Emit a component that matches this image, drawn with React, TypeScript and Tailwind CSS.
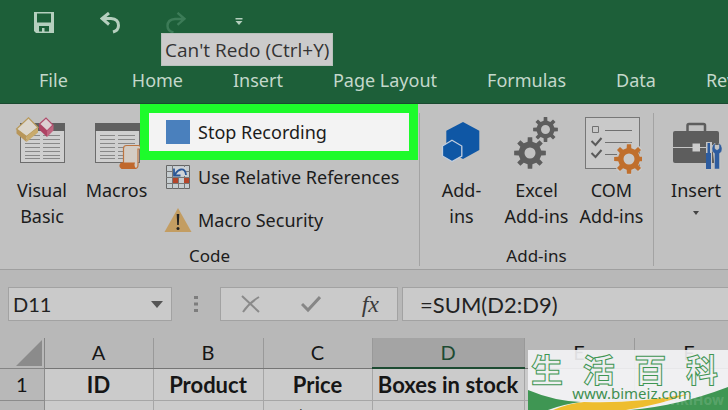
import type { ReactNode } from 'react';

const tabs = ['Home', 'Insert', 'Page Layout', 'Formulas', 'Data', 'Review'];

const columns = [
  { letter: 'A', title: 'ID', value: '1', width: 'w-[109px]' },
  { letter: 'B', title: 'Product', value: 'Mugs', width: 'w-[110px]', align: 'text-left' },
  { letter: 'C', title: 'Price', value: '$200', width: 'w-[109px]' },
  { letter: 'D', title: 'Boxes in stock', value: '200', width: 'w-[152px]', selected: true },
  { letter: 'E', title: '', value: '', width: 'w-[110px]' },
  { letter: 'F', title: '', value: '', width: 'w-[110px]' },
];

function gearPath(cx: number, cy: number, outer: number, inner: number, hole: number) {
  const teeth = 8;
  const step = (Math.PI * 2) / teeth;
  const points: string[] = [];
  const add = (r: number, a: number) =>
    points.push(`${(cx + r * Math.cos(a)).toFixed(2)} ${(cy + r * Math.sin(a)).toFixed(2)}`);
  for (let i = 0; i < teeth; i++) {
    const a = i * step - Math.PI / 2;
    add(inner, a - step * 0.27);
    add(outer, a - step * 0.18);
    add(outer, a + step * 0.18);
    add(inner, a + step * 0.27);
  }
  return `M${points.join('L')}Z M${cx - hole} ${cy}a${hole} ${hole} 0 1 0 ${hole * 2} 0a${hole} ${hole} 0 1 0 ${-hole * 2} 0Z`;
}

function LargeIcon({ children }: { children: ReactNode }) {
  return (
    <svg viewBox="0 0 60 60" className="h-[60px] w-[60px] shrink-0" fill="none" aria-hidden="true">
      {children}
    </svg>
  );
}

function CodeWindow() {
  return (
    <>
      <rect x="8.5" y="6.5" width="44" height="39" fill="#cfcfcf" stroke="#6c6c6c" />
      <path d="M8 6h45v8H8z" fill="#606060" />
      <path
        d="M13 18.5h15M31 18.5h17M13 22.5h15M31 22.5h17M13 26.5h15M31 26.5h17M13 30.5h15M31 30.5h17M13 34.5h15M31 34.5h17M13 38.5h15M31 38.5h17M13 41.5h15M31 41.5h17"
        stroke="#888"
      />
    </>
  );
}

function VisualBasicIcon() {
  return (
    <LargeIcon>
      <CodeWindow />
      <path d="M4.500 12 16.500 .8 26 10.500 14.500 19.500Z" fill="#dcd6cc" stroke="#b89a5c" strokeWidth="1.200" />
      <path d="M4.500 12 14.500 19.500V25L4.500 16.500Z" fill="#b8965a" />
      <path d="M14.500 19.500 26 10.500V15.500L14.500 25Z" fill="#c8aa6c" />
      <path d="M27.500 7 34 1 41 8 35 14Z" fill="#dccfd2" stroke="#b04c6c" strokeWidth="1.200" />
      <path d="M27 7 35 14V20L27 12.500Z" fill="#ae4364" />
      <path d="M35 14 41.500 8V13.500L35 20Z" fill="#c0647f" />
    </LargeIcon>
  );
}

function MacrosIcon() {
  return (
    <LargeIcon>
      <CodeWindow />
      <path
        d="M36.500 46V31.500q0-3 3-3H51q3 0 3 3.500h-3V48q0 3.500-3 3.500H36"
        fill="#d3ccc4"
        stroke="#bd7440"
        strokeWidth="1.200"
      />
      <path d="M34 45.500h14q-1.500 3.500 1.500 6.500H34.500q-4-3-.5-6.500Z" fill="#c0682c" />
    </LargeIcon>
  );
}

function AddInsIcon() {
  return (
    <LargeIcon>
      <path d="M31 5 47.300 13.700V33L31 42 14.300 33V13.700Z" fill="#0f57a5" />
      <path d="M20 23.300 29.800 29V39L20 44.500 10.500 39V29Z" fill="#0f57a5" stroke="#c3cede" strokeWidth="1.300" />
    </LargeIcon>
  );
}

function ExcelAddInsIcon() {
  return (
    <LargeIcon>
      <path d={gearPath(23, 36, 16, 11.5, 5.5)} fill="#5d5d5d" fillRule="evenodd" />
      <path d={gearPath(38.5, 12.5, 12.5, 9, 4.5)} fill="#5d5d5d" fillRule="evenodd" />
    </LargeIcon>
  );
}

function ComAddInsIcon() {
  return (
    <LargeIcon>
      <rect x="3.500" y=".5" width="54" height="51" fill="#c9c9c9" stroke="#777" />
      <path d="M10.500 9.500h6v6h-6zM23 13.500h27M23 25.500h27M23 37.500h12" stroke="#707070" />
      <path d="m9.500 24 4 4 6-7M9.500 36l4 4 6-7" stroke="#5a5a5a" strokeWidth="2" />
      <path d={gearPath(47, 42, 16.5, 12, 5.5)} fill="#c9c9c9" />
      <path d={gearPath(47, 42, 15, 11, 5.5)} fill="#c06f2d" fillRule="evenodd" />
    </LargeIcon>
  );
}

function ToolboxIcon() {
  return (
    <LargeIcon>
      <path d="M21.500 15V8.500q0-1.500 1.500-1.500h14.500q1.500 0 1.500 1.500V15" stroke="#5d5d5d" strokeWidth="2.500" />
      <rect x="7" y="14" width="46" height="32" rx="2" fill="#5d5d5d" />
      <path d="M7 30.500h46" stroke="#c6c6c6" strokeWidth="1.200" />
      <path d="M26.500 26.500h7.500v8h-7.500z" fill="#cdcdcd" />
      <path d="M40 25h6v28h-6zM46 28h9v24h-6z" fill="#c3c3c3" />
      <path d="M41.500 26h2.500v10h-2.500z" fill="#2d5c9f" />
      <path d="M40 36h5v16h-5z" fill="#2d5c9f" />
      <path
        d="M48.500 52V36.500q-3-2-2.500-5.500.5-3.500 3-5v5.500l2 1.500 2-1.500V26q2.500 1.500 3 5 .5 3.500-2.500 5.500V52Z"
        fill="#2d5c9f"
        stroke="#c3c3c3"
        strokeWidth=".5"
      />
    </LargeIcon>
  );
}

function RelativeIcon() {
  return (
    <svg viewBox="0 0 24 24" className="size-6 shrink-0" fill="none" aria-hidden="true">
      <path d="M.5.500h23v23H.5z" fill="#c6cdd0" stroke="#666" />
      <path d="M6.500 0v24M12.500 12v12M18.500 0v24M0 6.500h24M0 12.500h24M0 18.500h24" stroke="#777" />
      <path d="M7 13h5v5H7zM18 13h5v5h-5z" fill="#b4452a" />
      <path d="M7 2h13v9H7z" fill="#cfd3d7" />
      <path d="M20 10q-.5-6-5-5.500Q11.500 5 9 9.500M8 3.500V10.500h6.500" stroke="#2a5796" strokeWidth="1.800" />
    </svg>
  );
}

function WarningIcon() {
  return (
    <svg viewBox="0 0 28 24" className="-mx-0.5 h-6 w-7 shrink-0" aria-hidden="true">
      <path d="M14 0 27.500 24H.5Z" fill="#c39d62" />
      <path d="M12.700 6h2.600l-.5 11h-1.600z" fill="#222" />
      <circle cx="14" cy="20.500" r="1.500" fill="#222" />
    </svg>
  );
}

function RibbonButton({ icon, width, children }: { icon: ReactNode; width: string; children: ReactNode }) {
  return (
    <button type="button" className={`flex shrink-0 flex-col items-center pt-1 text-center ${width}`}>
      {icon}
      <span className="leading-[26px] whitespace-nowrap">{children}</span>
    </button>
  );
}

function RibbonGroup({ label, children }: { label: string; children: ReactNode }) {
  return (
    <section className="flex shrink-0 flex-col border-r border-[#a3a3a3]" aria-label={label}>
      <div className="flex flex-1 items-start">{children}</div>
      <p className="text-center text-[17px] leading-5">{label}</p>
    </section>
  );
}

function TitleBar() {
  return (
    <div className="flex h-14 items-start gap-[46px] pt-3 pl-[34px]">
      <button type="button" aria-label="Save">
        <svg viewBox="0 0 20 22" className="h-[22px] w-5" aria-hidden="true">
          <path d="M0 0h20v21H2l-2-2zM3 1.500v9h14v-9zM5 14v5.500h3v-3.500h2.500v3.500H15V14z" fill="#b5cfbe" fillRule="evenodd" />
        </svg>
      </button>
      <button type="button" aria-label="Undo">
        <svg viewBox="0 0 20 22" className="h-[22px] w-5" fill="none" stroke="#b5cfbe" strokeWidth="3" aria-hidden="true">
          <path d="M9 1 2 6.500l7 6M2.500 6.500H11q7.500.5 7.500 7 0 5-5.500 6.500" />
        </svg>
      </button>
      <div className="relative">
        <button type="button" aria-label="Redo" className="block">
          <svg viewBox="0 0 20 22" className="h-[22px] w-5" fill="none" stroke="#3c7b57" strokeWidth="2.400" aria-hidden="true">
            <path d="m11.500 .8 7 6-7 6M18 7H9q-7.500.5-7.500 7 0 5 6 6.500" />
          </svg>
        </button>
        <div
          role="tooltip"
          className="absolute top-[21px] -left-[5px] h-[33px] border border-[#b9c2bc] bg-[#cbcbcb] px-[3px] font-['Open_Sans','Noto_Sans',sans-serif] text-[19px] leading-[33px] whitespace-nowrap text-[#333]"
        >
          Can&apos;t Redo (Ctrl+Y)
        </div>
      </div>
      <button type="button" aria-label="Customize Quick Access Toolbar">
        <svg viewBox="0 0 14 22" className="h-[22px] w-3.5" fill="#b5cfbe" aria-hidden="true">
          <path d="M3.500 6h7v1.500h-7zM3.500 9h7L7 13z" />
        </svg>
      </button>
    </div>
  );
}

function Ribbon() {
  return (
    <div className="flex h-[166px] overflow-hidden border-b border-[#9f9f9f] bg-[#c1c1c1] pt-[9px] pb-[3px] text-lg text-[#1c1c1c]">
      <RibbonGroup label="Code">
        <RibbonButton icon={<VisualBasicIcon />} width="w-[84px]">
          Visual
          <br />
          Basic
        </RibbonButton>
        <RibbonButton icon={<MacrosIcon />} width="w-[65px]">
          Macros
        </RibbonButton>
        <div className="relative mr-[10px] w-[260px]">
          <button
            type="button"
            className="flex h-[38px] w-full items-center gap-2 bg-[#f3f3f3] pl-[17px] ring-[9px] ring-[#1dfb2b]"
          >
            <span className="size-6 shrink-0 bg-[#4a80bd]" />
            Stop Recording
          </button>
          <button type="button" className="mt-1 flex h-[43px] w-full items-center gap-2 pl-[17px] whitespace-nowrap">
            <RelativeIcon />
            Use Relative References
          </button>
          <button type="button" className="flex h-[43px] w-full items-center gap-2 pl-[17px]">
            <WarningIcon />
            Macro Security
          </button>
        </div>
      </RibbonGroup>
      <RibbonGroup label="Add-ins">
        <div className="flex px-1">
          <RibbonButton icon={<AddInsIcon />} width="w-[75px]">
            Add-
            <br />
            ins
          </RibbonButton>
          <RibbonButton icon={<ExcelAddInsIcon />} width="w-[75px]">
            Excel
            <br />
            Add-ins
          </RibbonButton>
          <RibbonButton icon={<ComAddInsIcon />} width="w-[75px]">
            COM
            <br />
            Add-ins
          </RibbonButton>
        </div>
      </RibbonGroup>
      <RibbonButton icon={<ToolboxIcon />} width="w-[84px]">
        Insert
        <svg viewBox="0 0 6 4" className="mx-auto mt-2 h-1 w-1.5" aria-hidden="true">
          <path d="M0 0h6L3 4z" fill="#444" />
        </svg>
      </RibbonButton>
    </div>
  );
}

function FormulaBar() {
  return (
    <div className="flex h-[68px] items-center bg-[#b8b8b8] pl-2 text-[#222]">
      <div className="flex h-[34px] w-[164px] shrink-0 items-center border border-[#a2a2a2] bg-[#cacaca] pr-2 pl-1">
        <input
          aria-label="Name box"
          defaultValue="D11"
          className="w-full min-w-0 flex-1 bg-transparent font-['Lato','Noto_Sans',sans-serif] text-xl outline-none"
        />
        <button type="button" aria-label="Open name list">
          <svg viewBox="0 0 12 7" className="h-[7px] w-3" aria-hidden="true">
            <path d="M0 0h12L6 7z" fill="#555" />
          </svg>
        </button>
      </div>
      <svg viewBox="0 0 4 18" className="mx-[22px] h-[18px] w-1 shrink-0" fill="#7d7d7d" aria-hidden="true">
        <path d="M0 1h4v3H0zM0 7.500h4v3H0zM0 14h4v3H0z" />
      </svg>
      <div className="flex h-[34px] w-[178px] shrink-0 items-center justify-between border border-[#a2a2a2] bg-[#cacaca] pr-[18px] pl-5">
        <button type="button" aria-label="Cancel">
          <svg viewBox="0 0 20 18" className="h-[18px] w-5" fill="none" stroke="#8a8a8a" strokeWidth="2" aria-hidden="true">
            <path d="m1 1 17 16M18 2Q8 8 2 17" />
          </svg>
        </button>
        <button type="button" aria-label="Enter">
          <svg viewBox="0 0 20 18" className="h-[18px] w-5" fill="none" stroke="#868686" strokeWidth="3" aria-hidden="true">
            <path d="m1 9 6 6L19 2" />
          </svg>
        </button>
        <button
          type="button"
          aria-label="Insert function"
          className="font-['Liberation_Serif',serif] text-2xl leading-8 text-[#3a3a3a] italic"
        >
          fx
        </button>
      </div>
      <input
        aria-label="Formula"
        defaultValue="=SUM(D2:D9)"
        className="ml-1 h-[34px] min-w-0 flex-1 border border-r-0 border-[#a2a2a2] bg-[#cacaca] pl-[17px] font-['Lato','Noto_Sans',sans-serif] text-[22px] outline-none"
      />
    </div>
  );
}

function Sheet() {
  return (
    <table className="w-[744px] table-fixed border-collapse bg-[#cbcbcb] font-['Lato','Noto_Sans',sans-serif] text-xl text-[#161616]">
      <thead>
        <tr className="h-[30px] bg-[#b8b8b8]">
          <th className="w-11 border-r border-b border-[#858585] p-0">
            <svg viewBox="0 0 26 26" className="mr-0.5 ml-auto h-[26px] w-[26px]" aria-hidden="true">
              <path d="M26 0v26H0z" fill="#8b8b8b" />
            </svg>
          </th>
          {columns.map((col) => (
            <th
              key={col.letter}
              scope="col"
              className={`border-r border-[#999] p-0 leading-[29px] font-normal ${col.width} ${
                col.selected ? 'border-b-2 border-b-[#1d4b32] bg-[#a4a4a4] text-[#1d4b32]' : 'border-b border-b-[#757575]'
              }`}
            >
              {col.letter}
            </th>
          ))}
        </tr>
      </thead>
      <tbody>
        <tr className="h-8">
          <th scope="row" className="border-r border-b border-[#8c8c8c] bg-[#b8b8b8] p-0 font-normal">
            1
          </th>
          {columns.map((col) => (
            <td
              key={col.letter}
              className="border-r border-b border-[#a6a6a6] p-0 text-center text-[22px] leading-[31px] font-bold whitespace-nowrap"
            >
              {col.title}
            </td>
          ))}
        </tr>
        <tr className="h-8">
          <th scope="row" className="border-r border-b border-[#8c8c8c] bg-[#b8b8b8] p-0 font-normal">
            2
          </th>
          {columns.map((col) => (
            <td key={col.letter} className={`border-r border-b border-[#a6a6a6] px-2 py-0 ${col.align ?? 'text-center'}`}>
              {col.value}
            </td>
          ))}
        </tr>
      </tbody>
    </table>
  );
}

function SiteBadge() {
  return (
    <div className="absolute right-0 bottom-0 h-[60px] w-[200px] overflow-hidden bg-[#f4f4f6]/90">
      <svg viewBox="0 0 200 60" className="absolute inset-0 h-full w-full" aria-hidden="true">
        <path d="M0 40Q26 51 53 52 36 54 20 60H0Z" fill="#3f9653" />
        <path d="M25 60Q42 53 56 52 105 54 160 44 135 54 98 60Z" fill="#eebd2e" />
        <path d="M102 60Q150 56 200 37V60Z" fill="#3f9653" />
      </svg>
      <div className="relative flex flex-col items-center">
        <p className="flex w-full justify-between pr-[10px] pl-[3px] font-['Noto_Sans_CJK_SC',sans-serif] text-[32px] leading-[36px] font-bold text-transparent [-webkit-text-stroke:1px_#3f9653]">
          <span>生</span>
          <span>活</span>
          <span>百</span>
          <span>科</span>
        </p>
        <a href="#" className="pl-2 text-[15px] leading-[14px] text-[#3f8f50]">
          www.bimeiz.com
        </a>
      </div>
      <span className="absolute right-1 bottom-0 text-sm leading-5 font-bold text-white/15">wikiHow</span>
    </div>
  );
}

export default function App() {
  return (
    <div className="relative h-screen overflow-hidden bg-[#b8b8b8] font-['Noto_Sans','Open_Sans',sans-serif]">
      <header className="border-b border-[#1a4a30] bg-[#1d5f39]">
        <TitleBar />
        <nav className="flex h-[47px] items-center gap-[50px] overflow-hidden pl-[39px] text-lg whitespace-nowrap text-[#c4d8cb]">
          <a href="#" className="mr-3.5">
            File
          </a>
          {tabs.map((tab) => (
            <a key={tab} href="#">
              {tab}
            </a>
          ))}
        </nav>
      </header>
      <Ribbon />
      <FormulaBar />
      <Sheet />
      <SiteBadge />
    </div>
  );
}
